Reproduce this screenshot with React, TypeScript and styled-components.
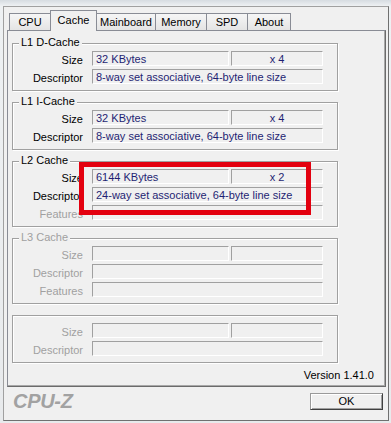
import React from "react";
import styled, { createGlobalStyle } from "styled-components";

const Global = createGlobalStyle`
  html, body { margin: 0; padding: 0; }
  body {
    width: 391px;
    height: 423px;
    overflow: hidden;
    background: linear-gradient(#d6dce1 0px, #eef1f3 6px, #e8eaec 100%);
    font-family: "Liberation Sans", Arial, sans-serif;
    font-size: 11px;
  }
`;

const Window = styled.div`
  box-sizing: border-box;
  margin: 6px 0 0 3px;
  width: 386px;
  height: 415px;
  border: 1px solid;
  border-color: #a0a0a0 #707070 #707070 #a0a0a0;
  background: #f0f0f0;
  padding: 3px 2px 0 3px;
  display: flex;
  flex-direction: column;
`;

const TabStrip = styled.div`
  display: flex;
  align-items: flex-end;
  height: 20px;
  padding-left: 2px;
`;

const Tab = styled.div<{ $active?: boolean; $w: number }>`
  box-sizing: border-box;
  width: ${(p) => p.$w}px;
  height: ${(p) => (p.$active ? 21 : 17)}px;
  margin-bottom: ${(p) => (p.$active ? -1 : 0)}px;
  margin-left: -1px;
  padding-bottom: ${(p) => (p.$active ? 2 : 0)}px;
  border: 1px solid #898c95;
  border-bottom: none;
  background: ${(p) =>
    p.$active ? "#f0f0f0" : "linear-gradient(#f6f6f6, #e4e4e4)"};
  position: relative;
  z-index: ${(p) => (p.$active ? 2 : 0)};
  display: flex;
  align-items: center;
  justify-content: center;
  line-height: 13px;
  color: #000;
  &:first-child {
    margin-left: 0;
  }
`;

const Panel = styled.div`
  position: relative;
  z-index: 1;
  box-sizing: border-box;
  width: 379px;
  height: 357px;
  border: 1px solid;
  border-color: #898c95 #6b6b6b #6b6b6b #898c95;
  box-shadow: inset -1px -1px 0 #a8a8a8;
  background: #f0f0f0;
  padding: 12px 11px 0 4px;
  display: flex;
  flex-direction: column;
`;

const GroupStack = styled.div`
  display: flex;
  flex-direction: column;
  gap: 11px;
`;

const Group = styled.div`
  position: relative;
  box-sizing: border-box;
  width: 326px;
  border: 1px solid #a0a0a0;
  box-shadow: inset 1px 1px 0 #fff, 1px 1px 0 #fff;
  padding: 7px 0 6px 0;
  display: flex;
  flex-direction: column;
  gap: 3px;
`;

const Legend = styled.span<{ $disabled?: boolean }>`
  position: absolute;
  left: 6px;
  top: -8px;
  padding: 0 2px;
  background: #f0f0f0;
  line-height: 13px;
  color: ${(p) => (p.$disabled ? "#a0a0a0" : "#000")};
`;

const Row = styled.div`
  display: flex;
  height: 15px;
`;

const Label = styled.div<{ $disabled?: boolean }>`
  box-sizing: border-box;
  width: 70px;
  height: 15px;
  margin-right: 9px;
  padding-top: 2px;
  line-height: 15px;
  text-align: right;
  white-space: nowrap;
  color: ${(p) => (p.$disabled ? "#a0a0a0" : "#000")};
`;

const FieldPair = styled.div`
  display: flex;
  gap: 2px;
`;

const Field = styled.div<{ $w: number; $center?: boolean }>`
  box-sizing: border-box;
  width: ${(p) => p.$w}px;
  height: 15px;
  border-top: 1px solid #a0a0a0;
  border-left: 1px solid #a0a0a0;
  border-right: 1px solid #fff;
  border-bottom: 1px solid #fff;
  padding-left: ${(p) => (p.$center ? 0 : 3)}px;
  padding-top: 1px;
  line-height: 13px;
  color: #1f1f73;
  text-align: ${(p) => (p.$center ? "center" : "left")};
  white-space: nowrap;
  overflow: hidden;
`;

const Highlight = styled.div`
  position: absolute;
  left: 66px;
  top: 0px;
  width: 232px;
  height: 53px;
  box-sizing: border-box;
  border: 5px solid #e3000f;
  pointer-events: none;
`;

const Version = styled.div`
  margin-top: 6px;
  text-align: right;
  line-height: 13px;
  color: #000;
`;

const Footer = styled.div`
  flex: 1;
  display: flex;
  align-items: center;
  justify-content: space-between;
  padding: 0 3px 4px 6px;
`;

const Logo = styled.div`
  font-family: "Liberation Sans", Arial, sans-serif;
  font-style: italic;
  font-weight: bold;
  font-size: 20px;
  letter-spacing: -0.3px;
  color: #a2a2a2;
`;

const OkButton = styled.button`
  box-sizing: border-box;
  width: 73px;
  height: 17px;
  padding: 0;
  border: 1px solid;
  border-color: #9a9a9a #404040 #404040 #9a9a9a;
  box-shadow: inset 1px 1px 0 #fff, inset -1px -1px 0 #a0a0a0;
  background: #f0f0f0;
  font-family: "Liberation Sans", Arial, sans-serif;
  font-size: 11px;
  line-height: 13px;
  color: #000;
`;

type RowSpec = {
  label: string;
  value?: string;
  extra?: string;
  pair?: boolean;
  disabled?: boolean;
};

function CacheRow({ label, value, extra, pair, disabled }: RowSpec) {
  return (
    <Row>
      <Label $disabled={disabled}>{label}</Label>
      {pair ? (
        <FieldPair>
          <Field $w={137}>{value}</Field>
          <Field $w={92} $center>
            {extra}
          </Field>
        </FieldPair>
      ) : (
        <Field $w={231}>{value}</Field>
      )}
    </Row>
  );
}

const tabs = [
  { name: "CPU", w: 42 },
  { name: "Cache", w: 47, active: true },
  { name: "Mainboard", w: 60 },
  { name: "Memory", w: 52 },
  { name: "SPD", w: 42 },
  { name: "About", w: 44 },
];

const desc8 = "8-way set associative, 64-byte line size";

export default function App() {
  return (
    <>
      <Global />
      <Window>
        <TabStrip>
          {tabs.map((t) => (
            <Tab key={t.name} $w={t.w} $active={t.active}>
              {t.name}
            </Tab>
          ))}
        </TabStrip>
        <Panel>
          <GroupStack>
            <Group>
              <Legend>L1 D-Cache</Legend>
              <CacheRow label="Size" value="32 KBytes" extra="x 4" pair />
              <CacheRow label="Descriptor" value={desc8} />
            </Group>
            <Group>
              <Legend>L1 I-Cache</Legend>
              <CacheRow label="Size" value="32 KBytes" extra="x 4" pair />
              <CacheRow label="Descriptor" value={desc8} />
            </Group>
            <Group>
              <Legend>L2 Cache</Legend>
              <CacheRow label="Size" value="6144 KBytes" extra="x 2" pair />
              <CacheRow
                label="Descriptor"
                value="24-way set associative, 64-byte line size"
              />
              <CacheRow label="Features" disabled />
              <Highlight />
            </Group>
            <Group>
              <Legend $disabled>L3 Cache</Legend>
              <CacheRow label="Size" pair disabled />
              <CacheRow label="Descriptor" disabled />
              <CacheRow label="Features" disabled />
            </Group>
            <Group>
              <CacheRow label="Size" pair disabled />
              <CacheRow label="Descriptor" disabled />
            </Group>
          </GroupStack>
          <Version>Version 1.41.0</Version>
        </Panel>
        <Footer>
          <Logo>CPU-Z</Logo>
          <OkButton>OK</OkButton>
        </Footer>
      </Window>
    </>
  );
}
